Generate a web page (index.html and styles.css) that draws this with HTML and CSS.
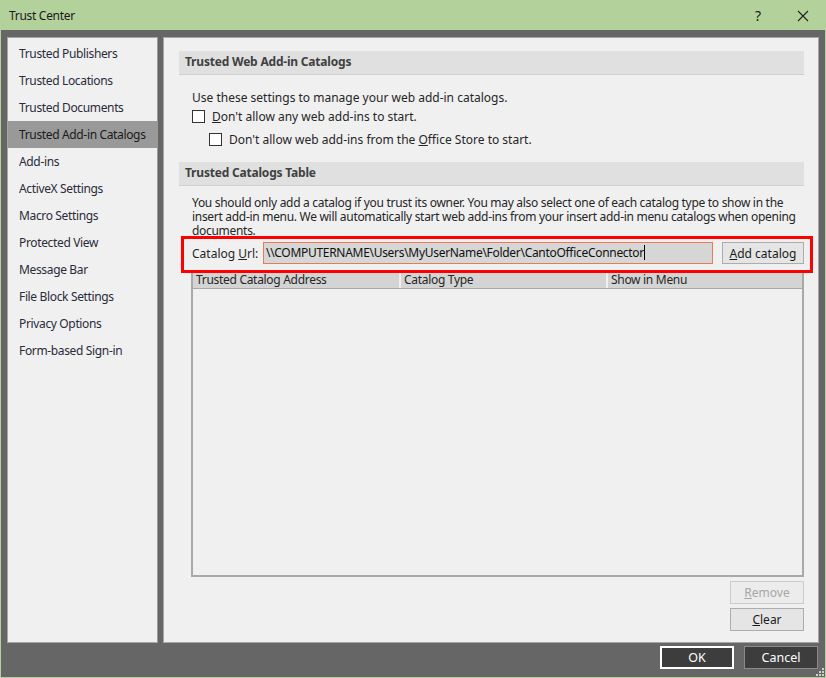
FILE: index.html
```html
<!DOCTYPE html>
<html>
<head>
<meta charset="utf-8">
<link rel="stylesheet" href="styles.css">
</head>
<body>
<div class="window">
  <div class="titlebar">
    <span class="title">Trust Center</span>
    <span class="tb-btns"><span class="help">?</span><span class="close">
      <svg width="12" height="12" viewBox="0 0 12 12"><path d="M1 1L11 11M11 1L1 11" stroke="#222" stroke-width="1.1" fill="none"/></svg>
    </span></span>
  </div>
  <div class="main">
    <nav class="nav">
      <div class="nav-item">Trusted Publishers</div>
      <div class="nav-item">Trusted Locations</div>
      <div class="nav-item">Trusted Documents</div>
      <div class="nav-item selected">Trusted Add-in Catalogs</div>
      <div class="nav-item">Add-ins</div>
      <div class="nav-item">ActiveX Settings</div>
      <div class="nav-item">Macro Settings</div>
      <div class="nav-item">Protected View</div>
      <div class="nav-item">Message Bar</div>
      <div class="nav-item">File Block Settings</div>
      <div class="nav-item">Privacy Options</div>
      <div class="nav-item">Form-based Sign-in</div>
    </nav>
    <section class="content">
      <div class="sec-head">Trusted Web Add-in Catalogs</div>
      <div class="intro">Use these settings to manage your web add-in catalogs.</div>
      <label class="check c1"><span class="box"></span><span><u>D</u>on't allow any web add-ins to start.</span></label>
      <label class="check c2"><span class="box"></span><span>Don't allow web add-ins from the <u>O</u>ffice Store to start.</span></label>
      <div class="sec-head h2">Trusted Catalogs Table</div>
      <p class="para">You should only add a catalog if you trust its owner. You may also select one of each catalog type to show in the insert add-in menu. We will automatically start web add-ins from your insert add-in menu catalogs when opening documents.</p>
      <div class="url-row">
        <span class="url-label">Catalog <u>U</u>rl:</span>
        <span class="url-input">\\COMPUTERNAME\Users\MyUserName\Folder\CantoOfficeConnector<span class="caret"></span></span>
        <span class="btn add"><u>A</u>dd catalog</span>
      </div>
      <div class="table">
        <div class="thead">
          <span class="th">Trusted Catalog Address</span>
          <span class="th">Catalog Type</span>
          <span class="th">Show in Menu</span>
        </div>
      </div>
      <div class="side-btns">
        <span class="btn disabled"><u>R</u>emove</span>
        <span class="btn"><u>C</u>lear</span>
      </div>
      <div class="highlight"></div>
    </section>
  </div>
  <div class="footer">
    <span class="dbtn ok">OK</span>
    <span class="dbtn">Cancel</span>
    <svg class="grip" width="8" height="8" viewBox="0 0 8 8"><g fill="#cfcfcf"><rect x="6" y="0" width="2" height="2"/><rect x="3" y="3" width="2" height="2"/><rect x="6" y="3" width="2" height="2"/><rect x="0" y="6" width="2" height="2"/><rect x="3" y="6" width="2" height="2"/><rect x="6" y="6" width="2" height="2"/></g></svg>
  </div>
</div>
</body>
</html>
```
FILE: styles.css
```css
* { box-sizing: border-box; }
html, body { margin: 0; padding: 0; }
body {
  font-family: "Noto Sans", "Open Sans", sans-serif;
  font-size: 12px;
  color: #262626;
  background: #fff;
}
.window {
  width: 826px;
  height: 678px;
  border: 1px solid #b3d19b;
  background: #666666;
  display: flex;
  flex-direction: column;
  position: relative;
}
.titlebar {
  height: 29px;
  background: #b3d19b;
  display: flex;
  align-items: center;
  justify-content: space-between;
  padding-left: 8px;
  color: #1a1a1a;
}
.title { font-size: 12px; letter-spacing: -0.3px; }
.tb-btns { display: flex; align-items: center; }
.help { width: 46px; text-align: center; font-size: 14px; margin-right: 0; }
.close { width: 44px; display: flex; justify-content: center; align-items: center; }
.main {
  display: flex;
  gap: 5px;
  padding: 7px 6px 0 6px;
  height: 613px;
}
.nav {
  width: 152px;
  height: 606px;
  background: #f0f0f0;
  border: 1px solid #a6a6a6;
  border-right-color: #9a9a9a;
  padding-top: 2px;
}
.nav-item {
  height: 27px;
  line-height: 27px;
  padding-left: 11px;
  white-space: nowrap;
  color: #2b2b3a;
  letter-spacing: -0.35px;
}
.nav-item.selected { background: #999999; color: #1a1a1a; }
.content {
  position: relative;
  flex: 1;
  height: 606px;
  background: #f0f0f0;
  border: 1px solid #a6a6a6;
  padding: 13px 14px 0 15px;
}
.sec-head {
  height: 24px;
  line-height: 22px;
  background: #e0e0e0;
  border-bottom: 1px solid #d0d0d0;
  padding-left: 6px;
  font-weight: bold;
  color: #404040;
  letter-spacing: -0.2px;
}
.intro { margin-top: 15px; padding-left: 13px; line-height: 16px; }
.check { display: flex; align-items: center; height: 22px; }
.check .box {
  width: 13px; height: 13px;
  background: #fff;
  border: 1px solid #333;
  margin-right: 7px;
  flex: none;
}
.c1 { padding-left: 13px; margin-top: -1px; }
.c2 { padding-left: 30px; margin-top: 1px; }
.h2 { margin-top: 12px; }
.para {
  margin: 10px 0 0 0;
  padding-left: 13px;
  padding-right: 2px;
  line-height: 14px;
  height: 42px;
  overflow: hidden;
  letter-spacing: -0.3px;
}
.url-row {
  display: flex;
  align-items: center;
  margin-top: 4px;
  padding-left: 13px;
  height: 22px;
}
.url-label { width: 71px; flex: none; }
.url-input {
  width: 450px;
  height: 22px;
  line-height: 20px;
  background: #d6d6d6;
  border: 1px solid #e87a56;
  padding-left: 2px;
  color: #111;
  letter-spacing: -0.3px;
  white-space: nowrap;
  overflow: hidden;
}
.caret { display: inline-block; width: 1px; height: 15px; background: #000; vertical-align: -3px; }
.btn {
  display: inline-flex;
  align-items: center;
  justify-content: center;
  height: 22px;
  width: 74px;
  background: #e5e5e5;
  border: 1px solid #adadad;
  color: #1a1a1a;
}
.btn.add { width: 82px; margin-left: 9px; }
.btn.disabled { color: #a6a6a6; border-color: #cccccc; background: #ececec; }
.table {
  margin-top: 7px;
  margin-left: 12px;
  margin-right: 0;
  height: 306px;
  border: 2px solid #a9a9a9;
  border-top-width: 1px;
  background: #f0f0f0;
}
.thead {
  display: grid;
  grid-template-columns: 206px 205px 1fr;
  gap: 2px;
  height: 17px;
  background: #f0f0f0;
  border-bottom: 1px solid #a9a9a9;
}
.th {
  background: #d4d4d4;
  padding-left: 3px;
  line-height: 16px;
  white-space: nowrap;
  letter-spacing: -0.3px;
}
.side-btns {
  display: flex;
  flex-direction: column;
  align-items: flex-end;
  gap: 4px;
  margin-top: 4px;
  margin-right: 0;
}
.side-btns .btn { height: 23px; }
.highlight {
  position: absolute;
  left: 17px;
  top: 198px;
  width: 632px;
  height: 37px;
  border: 3px solid #ff0000;
  pointer-events: none;
}
.footer {
  flex: 1;
  display: flex;
  justify-content: flex-end;
  align-items: flex-start;
  gap: 10px;
  padding: 3px 7px 0 0;
  position: relative;
}
.dbtn {
  width: 74px;
  height: 23px;
  display: flex;
  align-items: center;
  justify-content: center;
  background: #3d3d3d;
  border: 1px solid #8a8a8a;
  color: #fff;
  font-size: 12.5px;
}
.dbtn.ok { border: 2px solid #ffffff; }
.grip { position: absolute; right: 1px; bottom: 1px; }
```
